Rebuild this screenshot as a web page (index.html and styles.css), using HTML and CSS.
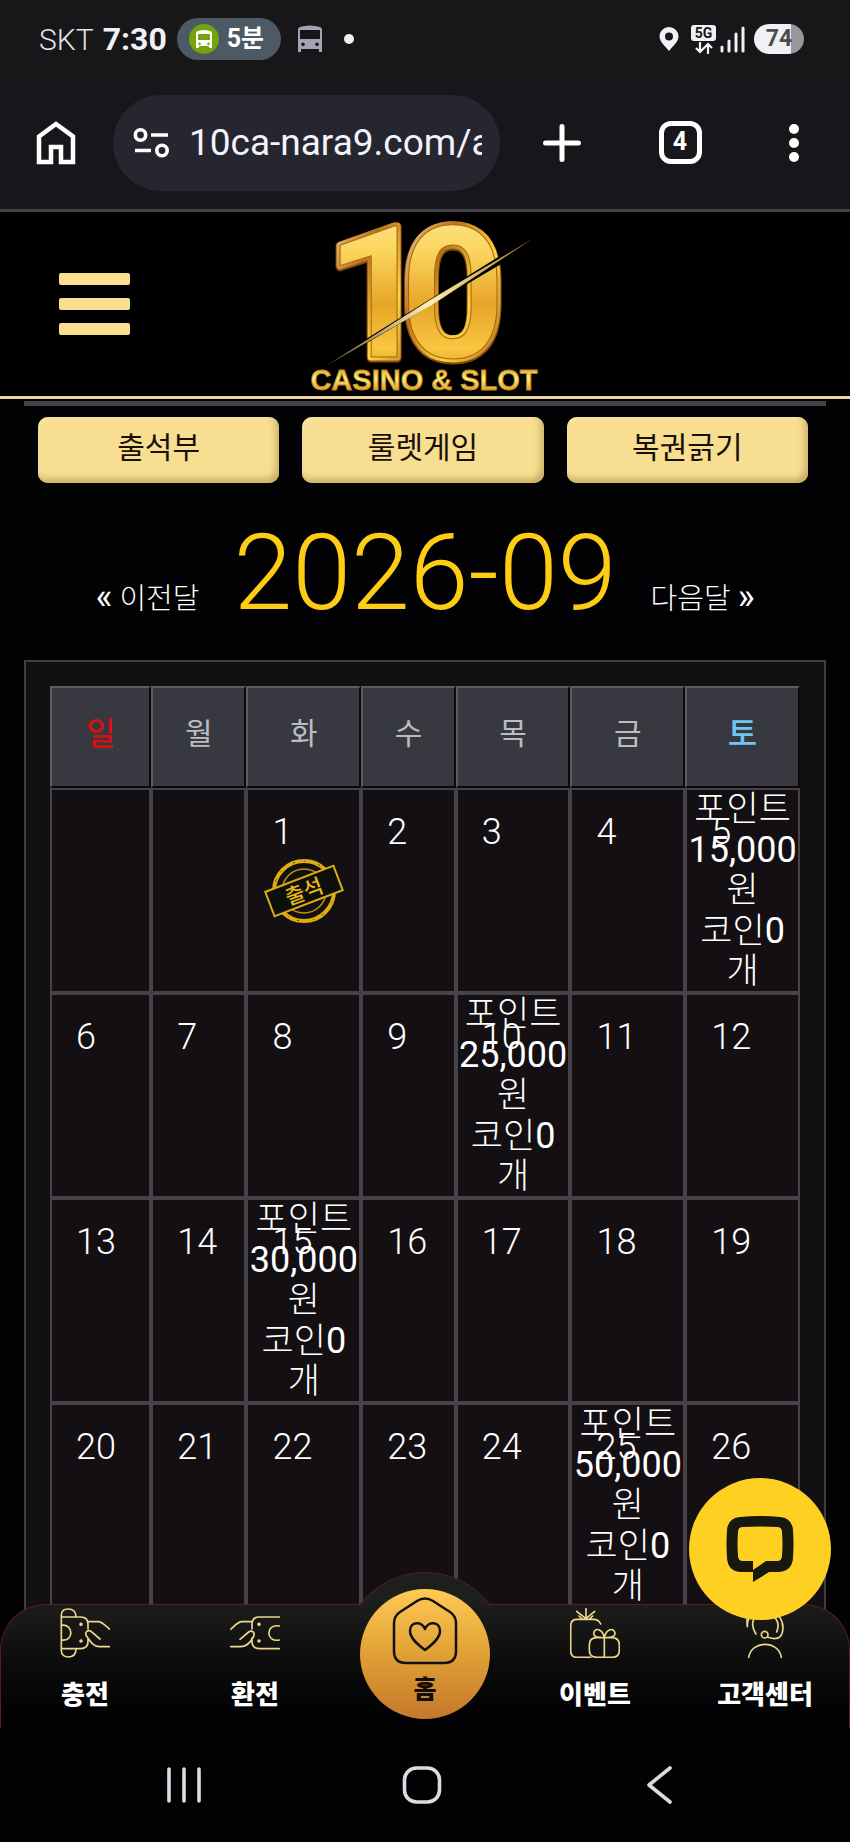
FILE: index.html
```html
<!DOCTYPE html>
<html lang="ko">
<head>
<meta charset="utf-8">
<meta name="viewport" content="width=device-width, initial-scale=1">
<title>출석부</title>
<link rel="stylesheet" href="styles.css">
</head>
<body>
<div class="status-bar">
  <div class="status-left">
    <span class="carrier">SKT</span>
    <span class="clock">7:30</span>
    <span class="bus-pill">
      <svg class="bus-badge" viewBox="0 0 30 30" aria-hidden="true">
        <circle cx="15" cy="15" r="15" fill="#74a30d"/>
        <path fill="#fff" fill-rule="evenodd" d="M9 7q6-2 12 0 2 .6 2 2v15h-3v-2H10v2H7V9q0-1.400 2-2zM9 10v6h12v-6zM10.500 18.500a1.300 1.300 0 1 0 .1 0zM19.500 18.500a1.300 1.300 0 1 0 .1 0z"/>
      </svg>
      <span>5분</span>
    </span>
    <svg class="bus" viewBox="0 0 26 28" aria-hidden="true">
      <path fill="#a2a4b4" fill-rule="evenodd" d="M3 2q10-3 20 0 2 .6 2 3v22h-3v-3H4v3H1V5q0-2.400 2-3zM3 5v9h20V5zM6 17.500a1.800 1.800 0 1 0 .1 0zM20 17.500a1.800 1.800 0 1 0 .1 0z"/>
    </svg>
    <span class="dot"></span>
  </div>
  <div class="status-right">
    <svg class="pin" viewBox="0 0 20 25" aria-hidden="true"><path fill="#f1f0f4" fill-rule="evenodd" d="M10 0a9.500 9.500 0 0 1 9.500 9.500C19.500 15 13 20 10 24 7 20 .5 15 .5 9.500A9.500 9.500 0 0 1 10 0zm0 5.500a4 4 0 1 0 0 8 4 4 0 0 0 0-8z"/></svg>
    <span class="network">
      <span class="net-label">5G</span>
      <svg viewBox="0 0 18 12" aria-hidden="true"><path fill="none" stroke="#f1f0f4" stroke-width="2.200" d="M5 0v10M1 6l4 4 4-4M13 12V2M9 6l4-4 4 4"/></svg>
    </span>
    <svg class="signal" viewBox="0 0 25 27" aria-hidden="true"><path stroke="#f1f0f4" stroke-width="3" stroke-linecap="round" d="M2 21v4M9 15v10M16 8v17M23 2v23"/></svg>
    <span class="battery">74</span>
  </div>
</div>

<div class="browser-bar">
  <button class="tool" aria-label="홈 페이지">
    <svg width="40" height="44" viewBox="0 0 40 44"><path fill="none" stroke="#fff" stroke-width="4.500" d="M3 15.500 20 3l17 12.500V41H25V26H15v15H3z"/></svg>
  </button>
  <div class="address">
    <svg width="36" height="32" viewBox="0 0 36 32" aria-hidden="true"><g fill="none" stroke="#fff" stroke-width="3.600"><circle cx="7.500" cy="8" r="5.200"/><circle cx="29" cy="23.500" r="5.200"/><path d="M18 8h17M2 23.500h16"/></g></svg>
    <input class="url" type="text" aria-label="주소" value="10ca-nara9.com/a">
  </div>
  <div class="tools">
    <button class="tool" aria-label="새 탭"><svg width="40" height="40" viewBox="0 0 40 40"><path stroke="#fff" stroke-width="5" stroke-linecap="round" d="M20 3.500v33M3.500 20h33"/></svg></button>
    <button class="tool tabs" aria-label="탭 4개">4</button>
    <button class="tool" aria-label="메뉴"><svg width="40" height="40" viewBox="0 0 40 40"><g fill="#fff"><circle cx="20" cy="6" r="5"/><circle cx="20" cy="20" r="5"/><circle cx="20" cy="34" r="5"/></g></svg></button>
  </div>
</div>

<header class="site-header">
  <button class="hamburger" aria-label="전체 메뉴"><span></span><span></span><span></span></button>
  <a class="logo" href="#" aria-label="10 CASINO &amp; SLOT">
    <svg width="250" height="180" viewBox="0 0 250 180">
      <defs>
        <linearGradient id="gold" x1="0" y1="0" x2="0" y2="1">
          <stop offset="0" stop-color="#fff0a6"/><stop offset=".3" stop-color="#fbd55e"/>
          <stop offset=".55" stop-color="#e7a528"/><stop offset=".75" stop-color="#f9c640"/><stop offset="1" stop-color="#c67d12"/>
        </linearGradient>
        <linearGradient id="rim" x1="0" y1="0" x2="1" y2="1">
          <stop offset="0" stop-color="#fff5c0"/><stop offset=".35" stop-color="#b9741a"/>
          <stop offset=".6" stop-color="#ffd540"/><stop offset="1" stop-color="#8a4a0c"/>
        </linearGradient>
        <linearGradient id="word" x1="0" y1="0" x2="0" y2="1">
          <stop offset="0" stop-color="#c8891a"/><stop offset=".45" stop-color="#fff07a"/><stop offset="1" stop-color="#c87a10"/>
        </linearGradient>
        <linearGradient id="blade" x1="0" y1="0" x2="1" y2="0">
          <stop offset="0" stop-color="#6d4a20"/><stop offset=".5" stop-color="#fff0b0"/><stop offset="1" stop-color="#a9792c"/>
        </linearGradient>
      </defs>
      <g class="logo-number" stroke-linejoin="round">
        <g stroke="#8a4c0c" stroke-width="9" fill="#8a4c0c"><text x="25" y="144">1</text><text x="100" y="144">0</text></g>
        <g stroke="url(#rim)" stroke-width="7" fill="url(#rim)"><text x="25" y="143">1</text><text x="100" y="143">0</text></g>
        <g stroke="#a8640f" stroke-width="1" fill="url(#gold)"><text x="25" y="143">1</text><text x="100" y="143">0</text></g>
      </g>
      <path d="M24 151 208 37v9L26 153z" fill="#000"/>
      <path d="M24 153 130 86 234 24 132 91z" fill="url(#blade)"/>
      <text class="logo-word" x="124" y="176" text-anchor="middle" fill="url(#word)" stroke="#c98a18" stroke-width=".8">CASINO &amp; SLOT</text>
    </svg>
  </a>
</header>

<main class="content">
  <nav class="games" aria-label="게임">
    <button>출석부</button>
    <button>룰렛게임</button>
    <button>복권긁기</button>
  </nav>

  <div class="month">
    <a href="#"><span class="arrow">«</span> 이전달</a>
    <h1>2026-09</h1>
    <a href="#">다음달 <span class="arrow">»</span></a>
  </div>

  <div class="calendar-frame">
    <table class="calendar">
      <colgroup><col class="c-sun"><col class="c-mon"><col class="c-wide"><col class="c-wed"><col class="c-wide"><col class="c-wide"><col class="c-wide"></colgroup>
      <thead>
        <tr><th class="sun">일</th><th>월</th><th>화</th><th>수</th><th>목</th><th>금</th><th class="sat">토</th></tr>
      </thead>
      <tbody>
        <tr>
          <td></td><td></td>
          <td><span class="date">1</span>
            <svg class="stamp" viewBox="0 0 84 68" role="img" aria-label="출석">
              <circle cx="42" cy="34" r="30" fill="none" stroke="#dcae12" stroke-width="4"/>
              <circle cx="42" cy="34" r="22" fill="none" stroke="#b8930f" stroke-width="1.500"/>
              <circle cx="42" cy="34" r="30" fill="none" stroke="#4a3b08" stroke-width="1" stroke-dasharray="2 9 1 14"/>
              <g transform="rotate(-21 42 34)">
                <rect x="5.500" y="21" width="73" height="26" fill="#0d0f0c" stroke="#dcae12" stroke-width="2"/>
                <text x="42" y="42" text-anchor="middle" fill="#e8ba12">출석</text>
              </g>
            </svg>
          </td>
          <td><span class="date">2</span></td><td><span class="date">3</span></td><td><span class="date">4</span></td>
          <td><span class="date">5</span><div class="reward">포인트<b>15,000</b>원<br>코인<b>0</b><br>개</div></td>
        </tr>
        <tr>
          <td><span class="date">6</span></td><td><span class="date">7</span></td><td><span class="date">8</span></td><td><span class="date">9</span></td>
          <td><span class="date">10</span><div class="reward">포인트<b>25,000</b>원<br>코인<b>0</b><br>개</div></td>
          <td><span class="date">11</span></td><td><span class="date">12</span></td>
        </tr>
        <tr>
          <td><span class="date">13</span></td><td><span class="date">14</span></td>
          <td><span class="date">15</span><div class="reward">포인트<b>30,000</b>원<br>코인<b>0</b><br>개</div></td>
          <td><span class="date">16</span></td><td><span class="date">17</span></td><td><span class="date">18</span></td><td><span class="date">19</span></td>
        </tr>
        <tr>
          <td><span class="date">20</span></td><td><span class="date">21</span></td><td><span class="date">22</span></td><td><span class="date">23</span></td><td><span class="date">24</span></td>
          <td><span class="date">25</span><div class="reward">포인트<b>50,000</b>원<br>코인<b>0</b><br>개</div></td>
          <td><span class="date">26</span></td>
        </tr>
      </tbody>
    </table>
  </div>
</main>

<nav class="dock" aria-label="하단 메뉴">
  <div class="dock-bar"></div>
  <div class="bump"><span></span></div>
  <div class="dock-items">
    <a href="#">
      <svg class="dock-icon" viewBox="0 0 150 150" aria-hidden="true"><path d="M4 22C4 8 14 3 24 3s24 4 24 24M4 22v105c0 14 10 20 20 20s24-4 24-24M4 27h58c14 0 22 8 22 22v14M84 92v8c0 14-8 22-22 22H4M4 52c38-6 38 50 0 44M84 41h32c12 2 20 12 32 22M148 116h-30c-20 0-28-18-38-31-8-12 4-22 14-14l26 22"/><circle class="pip" cx="63" cy="49" r="3"/><circle class="pip" cx="63" cy="99" r="3"/></svg>
      <span>충전</span>
    </a>
    <a href="#">
      <svg class="dock-icon" viewBox="0 0 150 150" aria-hidden="true"><path d="M148 27H88C74 27 66 35 66 49v14M66 90v10c0 14 8 22 22 22h60M148 54c-42-8-42 50 0 42M66 41H34C22 43 14 54 2 64M2 116h30c20 0 30-14 38-29 7-14-4-22-14-15L30 94"/><circle class="pip" cx="87" cy="49" r="3"/><circle class="pip" cx="87" cy="99" r="3"/></svg>
      <span>환전</span>
    </a>
    <a class="home" href="#">
      <svg viewBox="0 0 66 68" aria-hidden="true"><path fill="none" stroke="#111" stroke-width="2.500" stroke-linejoin="round" d="M25 4q8-5 16 0l17 11q6 4 6 11v28q0 12-12 12H14Q2 66 2 54V26q0-7 6-11zM33 53C25 47 18 41 18 34c0-10 12-10 15-2 3-8 15-8 15 2 0 7-7 13-15 19z"/></svg>
      <span>홈</span>
    </a>
    <a href="#">
      <svg class="dock-icon" viewBox="0 0 150 150" aria-hidden="true"><path d="M92 48q-6-14-22-14H22Q2 34 2 54v74q0 20 20 20h40M48 34V2M48 32 20 10M48 32 74 10M38 34 27 24M58 34l10-10M80 89h46q22 0 22 22v15q0 22-22 22H80q-22 0-22-22v-15q0-22 22-22zM103 89v59M103 89C80 89 68 86 72 72c6-14 26-8 31 17zM103 89c23 0 35-3 31-17-6-14-26-8-31 17z"/></svg>
      <span>이벤트</span>
    </a>
    <a href="#">
      <svg class="dock-icon" viewBox="0 0 150 150" aria-hidden="true"><path d="M26 148c8-52 90-52 98 0M22 56c-4-66 106-66 106 0M22 30q-2 14 0 26M48 78c-24-40 0-62 26-62s50 22 36 56M84 88c34 12 48-4 44-40"/><circle cx="74" cy="80" r="10"/></svg>
      <span>고객센터</span>
    </a>
  </div>
  <button class="chat" aria-label="실시간 상담">
    <svg width="68" height="68" viewBox="0 0 68 68"><path fill="#17190f" fill-rule="evenodd" d="M14 2Q34 0 54 2q12 1 13 13 1 14 0 28-1 13-14 14H43L27 67V57H14Q2 56 1 43 0 29 1 15 2 3 14 2zM17 12q-5 0-5 5-1 12 0 24 0 5 5 5h10v9l13-9h11q5 0 5-5 1-12 0-24 0-5-5-5-17-1-34 0z"/></svg>
  </button>
</nav>

<div class="system-nav">
  <button aria-label="최근 앱"><svg width="40" height="40" viewBox="0 0 40 40"><path stroke="#dcdbe0" stroke-width="3.600" stroke-linecap="round" d="M5 4v32M20 4v32M35 4v32"/></svg></button>
  <button aria-label="홈 화면"><svg width="40" height="40" viewBox="0 0 40 40"><rect x="2.500" y="3" width="35" height="34" rx="12" fill="none" stroke="#dcdbe0" stroke-width="3.600"/></svg></button>
  <button aria-label="뒤로"><svg width="40" height="40" viewBox="0 0 40 40"><path fill="none" stroke="#dcdbe0" stroke-width="3.600" stroke-linecap="round" stroke-linejoin="round" d="M30 3 9 20l21 17"/></svg></button>
</div>
</body>
</html>
```

FILE: styles.css
```css
* { box-sizing: border-box; }

body {
  margin: 0;
  min-height: 100vh;
  display: flex;
  flex-direction: column;
  background: #020103;
  color: #fff;
  font-family: Roboto, "Noto Sans CJK KR", sans-serif;
}

button {
  margin: 0;
  padding: 0;
  border: 0;
  background: none;
  color: inherit;
  font: inherit;
}

a { color: inherit; text-decoration: none; }
svg { display: block; flex: none; }

/* Phone status bar */
.status-bar {
  display: flex;
  justify-content: space-between;
  align-items: center;
  height: 78px;
  padding: 0 46px 0 39px;
  background: #17171a;
}
.status-left, .status-right { display: flex; align-items: center; }
.carrier { font-size: 30px; font-weight: 300; color: #e3e2e6; }
.clock { margin-left: 9px; font-size: 32px; font-weight: 700; color: #f1f0f4; }
.bus-pill {
  display: flex;
  align-items: center;
  gap: 8px;
  height: 42px;
  margin-left: 10px;
  padding: 0 17px 0 12px;
  border-radius: 21px;
  background: #4e5966;
  font-size: 25px;
  line-height: 42px;
  font-weight: 700;
}
.bus-badge { width: 30px; height: 30px; }
.bus { width: 26px; height: 28px; margin-left: 16px; }
.dot { width: 10px; height: 10px; margin-left: 21px; border-radius: 50%; background: #f1f0f4; }
.pin { width: 20px; height: 25px; margin-right: 12px; }
.network { display: flex; flex-direction: column; align-items: center; gap: 1px; margin-right: 4px; }
.network svg { width: 18px; height: 12px; }
.net-label {
  width: 25px;
  border-radius: 3px;
  background: #f1f0f4;
  color: #17171a;
  font-size: 14px;
  line-height: 16px;
  font-weight: 700;
  text-align: center;
}
.signal { width: 25px; height: 27px; margin-right: 9px; }
.battery {
  width: 50px;
  border-radius: 15px;
  background: linear-gradient(90deg, #f1f0f4 74%, #98979b 74%);
  color: #4c4b50;
  font-size: 23px;
  line-height: 30px;
  font-weight: 700;
  text-align: center;
}

/* Browser toolbar */
.browser-bar {
  display: flex;
  align-items: center;
  height: 134px;
  padding: 0 34px 2px;
  border-bottom: 3px solid #434347;
  background: #17171b;
}
.tool { display: grid; place-items: center; width: 44px; height: 48px; }
.address {
  display: flex;
  align-items: center;
  gap: 20px;
  flex: 1;
  min-width: 0;
  height: 96px;
  margin-left: 35px;
  padding: 0 18px 0 20px;
  border-radius: 48px;
  background: #25262f;
}
.url {
  flex: 1;
  min-width: 0;
  padding: 0;
  border: 0;
  outline: 0;
  background: none;
  color: #f4f3fb;
  font: 400 37px/48px Roboto, sans-serif;
}
.tools { display: flex; justify-content: space-between; width: 276px; margin-left: 40px; }
.tabs {
  width: 43px;
  height: 43px;
  margin: 2px 0 0 4px;
  border: 5px solid #fff;
  border-radius: 12px;
  font-size: 25px;
  line-height: 32px;
  font-weight: 700;
}

/* Site header */
.site-header {
  display: grid;
  grid-template-columns: 1fr auto 1fr;
  align-items: center;
  height: 187px;
  padding: 0 59px;
  border-bottom: 3px solid #f0d7a2;
  background: #000;
}
.hamburger { display: flex; flex-direction: column; gap: 13px; width: 71px; }
.hamburger span { height: 12px; border-radius: 2px; background: #f9df8e; }
.logo-number { font: 700 184px/1 Roboto, sans-serif; }
.logo-word { font: 700 29px/1 "Liberation Sans", sans-serif; }

/* Attendance page */
.content { padding: 2px 24px 0; }
.games {
  display: grid;
  grid-template-columns: repeat(3, 1fr);
  gap: 23px;
  padding: 11px 18px 0 14px;
  border-top: 5px solid #454347;
}
.games button {
  height: 66px;
  padding-bottom: 10px;
  border-radius: 10px;
  background: #f8de91;
  box-shadow: inset -3px -4px 7px #c9ab62, inset 1px 1px 4px #fff0b4;
  color: #17110a;
  font-size: 30px;
}
.month {
  display: flex;
  justify-content: center;
  align-items: baseline;
  gap: 34px;
  height: 177px;
  padding-top: 27px;
  font-size: 29px;
  font-weight: 300;
}
.month h1 { margin: 0; color: #fdcc14; font-size: 106px; line-height: 126px; font-weight: 300; }
.arrow { font-size: 36px; line-height: 36px; font-weight: 400; }

.calendar-frame { padding: 24px 24px 48px; border: 2px solid #403e42; border-bottom: 0; background: #121012; }
.calendar { width: 100%; table-layout: fixed; border-collapse: separate; border-spacing: 0; }
.c-sun { width: 13.500%; }
.c-mon { width: 12.700%; }
.c-wed { width: 12.600%; }
.c-wide { width: 15.300%; }
.calendar th {
  height: 102px;
  padding: 0 0 12px;
  border: 2px solid;
  border-color: #5b5b60 #09090b #09090b #5b5b60;
  background: #373840;
  color: #bdbcc2;
  font-size: 30px;
  font-weight: 400;
}
.calendar .sun { color: #d01215; font-size: 32px; font-weight: 500; }
.calendar .sat { color: #70c6f2; font-size: 32px; font-weight: 500; }
.calendar td { position: relative; height: 205px; padding: 0; border: 2px solid #454347; background: #130f12; vertical-align: top; }
.date { display: block; padding: 21px 0 0 24px; font-size: 36px; line-height: 42px; font-weight: 300; }
.stamp { width: 84px; height: 68px; margin: 4px auto 0; font: 500 21px "Noto Sans CJK KR", sans-serif; }
.reward {
  position: absolute;
  inset: 0;
  font-size: 35px;
  line-height: 40px;
  font-weight: 300;
  text-align: center;
}
.reward b { font-size: 36px; font-weight: 400; }

/* Floating bottom menu */
.dock { position: relative; height: 124px; margin-top: -52px; font-weight: 900; }
.dock-bar {
  height: 100%;
  border: 1px solid #5a1c20;
  border-bottom: 0;
  border-radius: 46px 46px 0 0;
  background: linear-gradient(#1c1d1b, #0c0b0c 50%, #020103 90%);
}
.bump { position: absolute; left: 50%; top: -32px; width: 164px; height: 34px; margin-left: -82px; overflow: hidden; }
.bump span { display: block; height: 164px; border: 1px solid #5a1c20; border-radius: 50%; background: #1d1f1d; }
.dock-items { position: absolute; inset: 0; display: grid; grid-template-columns: repeat(5, 1fr); justify-items: center; }
.dock-items a { display: flex; flex-direction: column; align-items: center; padding-top: 4px; font-size: 26px; line-height: 36px; }
.dock-icon { width: 50px; height: 50px; margin-bottom: 19px; fill: none; stroke: #ecd78b; stroke-width: 5; stroke-linecap: round; stroke-linejoin: round; }
.dock-icon .pip { fill: #ecd78b; }
.dock-items .home {
  width: 130px;
  height: 130px;
  margin-top: -15px;
  padding-top: 8px;
  border-radius: 50%;
  background: linear-gradient(#ffca55, #e0a035 50%, #c5782b);
  color: #130d08;
  font-size: 25px;
}
.home svg { width: 66px; height: 68px; margin-bottom: 7px; }
.chat {
  position: absolute;
  right: 19px;
  top: -126px;
  display: grid;
  place-items: center;
  width: 142px;
  height: 142px;
  border-radius: 50%;
  background: #fed022;
}

/* System navigation */
.system-nav { display: grid; grid-template-columns: 196px 1fr 196px; align-items: center; flex: 1; min-height: 112px; padding: 0 92px 0 86px; background: #020103; }
.system-nav button { display: grid; place-items: center; }
```
